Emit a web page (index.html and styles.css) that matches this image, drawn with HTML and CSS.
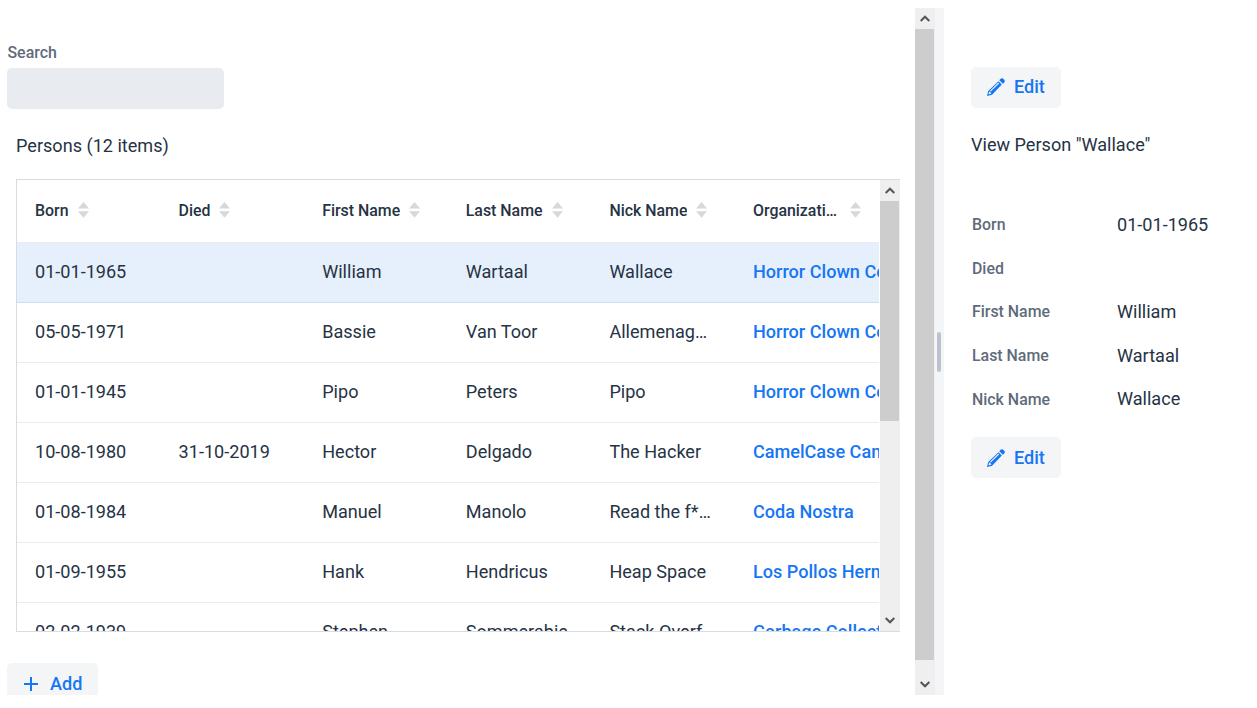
FILE: index.html
```html
<!DOCTYPE html>
<html lang="en">
<head>
<meta charset="utf-8">
<title>Persons</title>
<link rel="stylesheet" href="styles.css">
</head>
<body>
<svg class="defs" width="0" height="0">
  <symbol id="pencil" viewBox="0 0 18 18"><path fill="currentColor" fill-rule="evenodd" d="M0 18L1.200 12.900 11.500 3.200 14.800 6.500 5.100 16.800zM1.400 16.300L4.100 15.700 4.300 14.700 3.300 14.400 3 13.500 2.100 13.700z"/><path stroke="#f3f5f7" stroke-width="1.100" d="M3.400 13.100L11.700 5"/><path fill="currentColor" d="M12.300 2.200L13.300.9Q15-.7 16.800 1.200 18.700 3 17.100 4.700L15.800 5.700z"/></symbol>
  <symbol id="sorter" viewBox="0 0 11 16"><path fill="#d5d8dc" d="M0 6.500L5.500 0 11 6.500zM0 9.200h11L5.500 15.700z"/></symbol>
  <symbol id="up" viewBox="0 0 10 7"><path fill="none" stroke="#555" stroke-width="2" d="M.7 6L5 1.700 9.300 6"/></symbol>
  <symbol id="down" viewBox="0 0 10 7"><path fill="none" stroke="#555" stroke-width="2" d="M.7 1L5 5.300 9.300 1"/></symbol>
</svg>
<div class="split">
  <main class="master">
    <label class="label">Search</label>
    <div class="field"></div>
    <h1 class="title">Persons (12 items)</h1>
    <div class="grid">
      <div class="table">
        <div class="row head">
          <div class="cell"><span>Born</span><svg class="sort"><use href="#sorter"/></svg></div>
          <div class="cell"><span>Died</span><svg class="sort"><use href="#sorter"/></svg></div>
          <div class="cell"><span>First Name</span><svg class="sort"><use href="#sorter"/></svg></div>
          <div class="cell"><span>Last Name</span><svg class="sort"><use href="#sorter"/></svg></div>
          <div class="cell"><span>Nick Name</span><svg class="sort"><use href="#sorter"/></svg></div>
          <div class="cell"><span class="grow">Organization</span><svg class="sort"><use href="#sorter"/></svg></div>
        </div>
        <div class="row selected"><div class="cell">01-01-1965</div><div class="cell"></div><div class="cell">William</div><div class="cell">Wartaal</div><div class="cell">Wallace</div><div class="cell link">Horror Clown Company</div></div>
        <div class="row"><div class="cell">05-05-1971</div><div class="cell"></div><div class="cell">Bassie</div><div class="cell">Van Toor</div><div class="cell">Allemenag…</div><div class="cell link">Horror Clown Company</div></div>
        <div class="row"><div class="cell">01-01-1945</div><div class="cell"></div><div class="cell">Pipo</div><div class="cell">Peters</div><div class="cell">Pipo</div><div class="cell link">Horror Clown Company</div></div>
        <div class="row"><div class="cell">10-08-1980</div><div class="cell">31-10-2019</div><div class="cell">Hector</div><div class="cell">Delgado</div><div class="cell">The Hacker</div><div class="cell link">CamelCase Campus</div></div>
        <div class="row"><div class="cell">01-08-1984</div><div class="cell"></div><div class="cell">Manuel</div><div class="cell">Manolo</div><div class="cell">Read the f*…</div><div class="cell link">Coda Nostra</div></div>
        <div class="row"><div class="cell">01-09-1955</div><div class="cell"></div><div class="cell">Hank</div><div class="cell">Hendricus</div><div class="cell">Heap Space</div><div class="cell link">Los Pollos Hermanos</div></div>
        <div class="row"><div class="cell">02-02-1939</div><div class="cell"></div><div class="cell">Stephen</div><div class="cell">Sommerabie</div><div class="cell">Stack Overf…</div><div class="cell link">Garbage Collectors</div></div>
      </div>
      <div class="scroll"><svg class="arrow"><use href="#up"/></svg><div class="thumb"></div><svg class="arrow"><use href="#down"/></svg></div>
    </div>
    <button class="button add"><svg class="plus" viewBox="0 0 14 14"><path d="M7 0v14M0 7h14" stroke="currentColor" stroke-width="2"/></svg>Add</button>
  </main>
  <div class="scroll outer"><svg class="arrow"><use href="#up"/></svg><div class="thumb"></div><svg class="arrow"><use href="#down"/></svg></div>
  <div class="splitter"><div class="handle"></div></div>
  <aside class="detail">
    <button class="button"><svg class="pencil"><use href="#pencil"/></svg>Edit</button>
    <h2 class="subtitle">View Person "Wallace"</h2>
    <dl class="form">
      <dt>Born</dt><dd>01-01-1965</dd>
      <dt>Died</dt><dd></dd>
      <dt>First Name</dt><dd>William</dd>
      <dt>Last Name</dt><dd>Wartaal</dd>
      <dt>Nick Name</dt><dd>Wallace</dd>
    </dl>
    <button class="button low"><svg class="pencil"><use href="#pencil"/></svg>Edit</button>
  </aside>
</div>
</body>
</html>
```
FILE: styles.css
```css
* { box-sizing: border-box; }
body { margin: 0; padding-top: 8px; background: #fff; color: #263344; font: 400 18.08px/30px Roboto, sans-serif; overflow: hidden; }
.defs { display: block; height: 0; }
.split { display: flex; height: 687px; overflow: hidden; }
.master { width: 915px; flex: none; padding: 32px 0 0 7px; overflow: hidden; }
.label { display: block; height: 28px; padding-left: .5px; font-size: 15.9px; line-height: 25px; font-weight: 500; color: #5f6b7b; }
.field { width: 217px; height: 41px; border-radius: 5px; background: #e8ebef; }
.title { margin: 22px 0 18px 9px; font-size: 18.08px; line-height: 30px; font-weight: 400; }
.grid { display: flex; width: 884px; height: 453px; margin-left: 9px; border: 1px solid #d8dce1; border-right: 0; }
.table { width: 862px; flex: none; overflow: hidden; }
.row { display: grid; grid-template-columns: repeat(6, 143.6px); height: 60px; border-bottom: 1px solid #e8ebef; }
.cell { display: flex; align-items: center; padding: 0 18px; white-space: nowrap; min-width: 0; height: 59px; padding-bottom: 1px; }
.cell span { overflow: hidden; text-overflow: ellipsis; }
.cell .grow { flex: 1; }
.head { height: 63px; font-size: 15.9px; font-weight: 500; }
.head .cell { height: 62px; }
.sort { width: 11px; height: 16px; margin: 0 0 2px 9px; flex: none; }
.selected { background: #e6f0fd; border-bottom-color: #cfdeef; }
.link { color: #1676f3; font-weight: 500; }
.scroll { width: 20px; margin-left: 1px; flex: none; display: flex; flex-direction: column; background: #efefef; }
.arrow { width: 10px; height: 7px; margin: 7px 0 7px 4.500px; flex: none; }
.scroll .thumb { width: 19px; height: 220px; background: #cdcdcd; margin-bottom: auto; }
.outer { margin-left: 0; }
.outer .thumb { height: 631px; }
.button { display: flex; align-items: center; width: 90px; height: 41px; padding: 0 0 1px 16px; border: 0; border-radius: 5px; background: #f3f5f7; color: #1676f3; font: 500 18.08px/30px Roboto, sans-serif; }
.low { padding-bottom: 0; padding-top: 1px; }
.add { width: 91px; margin-top: 31px; padding: 1px 0 0 17px; }
.plus { width: 14px; height: 14px; margin-right: 12px; }
.pencil { width: 18px; height: 18px; margin-right: 9px; }
.splitter { display: flex; align-items: center; width: 9px; flex: none; padding-left: 2px; background: #f4f5f7; }
.handle { width: 4px; height: 40px; border-radius: 2px; background: #bac3cd; }
.detail { padding: 59px 0 0 27px; }
.subtitle { margin: 22px 0 43.200px; font-size: 18.08px; line-height: 30px; font-weight: 400; }
.form { display: grid; grid-template-columns: 145px 120px; grid-auto-rows: 43.7px; align-items: center; margin: 0 0 15.800px 1px; }
.form dt { font-size: 15.9px; font-weight: 500; color: #5f6b7b; }
.form dd { margin: 0; padding-bottom: 1px; }
```
